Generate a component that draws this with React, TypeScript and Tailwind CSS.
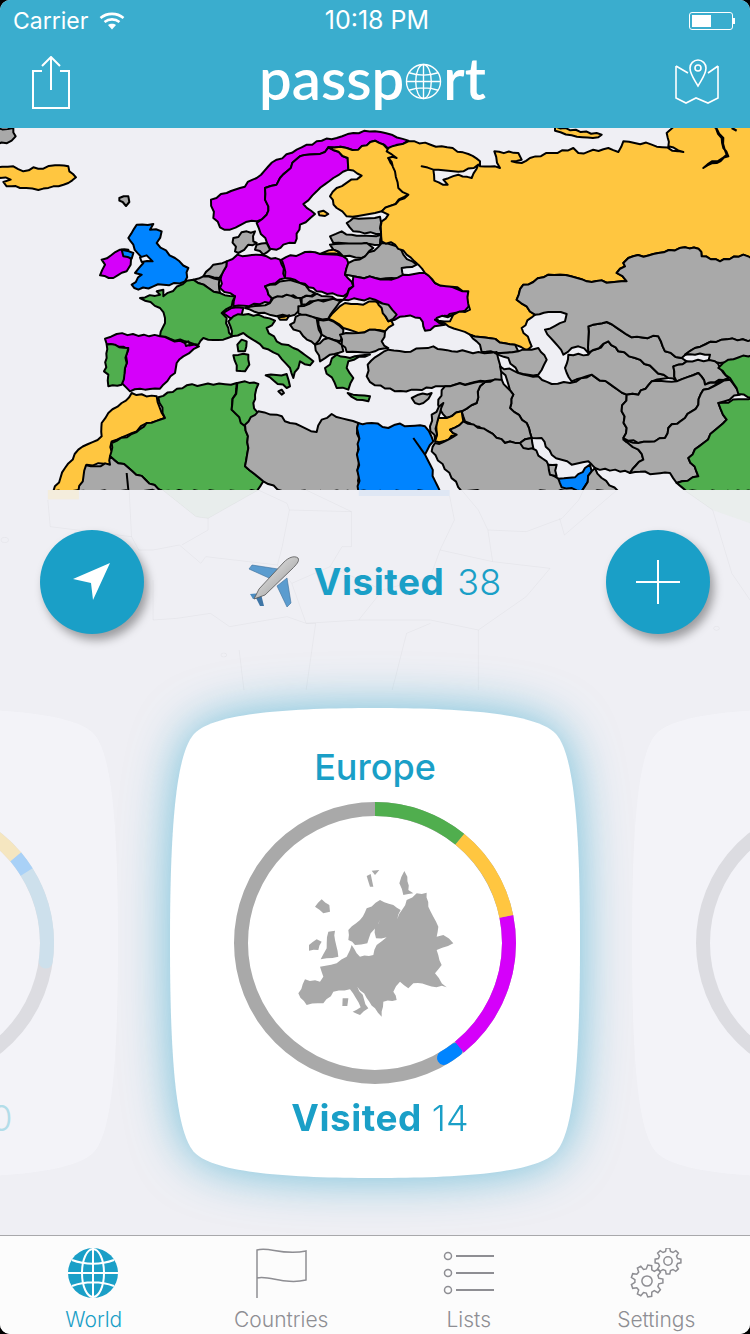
import React from 'react';

const GREEN = '#50ae4e';
const ORANGE = '#ffc640';
const PURPLE = '#d500fa';
const BLUE = '#0084ff';
const GRAY = '#a9a9a9';

// traced from the reference at 3x, x < 1125 is the left half
const westShapes: [string, string][] = [
  [GRAY, '-10,0 40,0 47,25 35,38 -10,50'],
  [ORANGE, '-10,118 40,115 70,130 100,118 130,122 165,112 205,115 208,130 228,148 205,165 160,175 115,186 60,180 20,175 10,162 32,155 0,150 -10,140'],
  [GRAY, '358,210 385,205 388,222 378,234 368,222 358,218'],
  [PURPLE, '633,215 680,195 720,180 770,150 830,95 890,65 950,40 1010,30 1060,15 1125,10 1175,20 1225,38 1205,50 1165,62 1125,38 1075,65 1040,60 985,58 975,72 900,85 840,150 830,170 795,180 795,215 805,235 800,260 770,280 755,278 690,305 660,298 640,270'],
  [PURPLE, '795,180 830,170 840,150 900,85 975,72 985,58 1043,90 1045,125 1000,150 950,190 910,228 945,258 900,290 885,345 850,350 830,365 810,362 770,285 800,260 805,235 795,215'],
  [ORANGE, '985,58 1040,60 1075,65 1125,38 1160,60 1190,90 1165,90 1190,130 1200,175 1225,200 1145,250 1125,255 1040,265 1010,240 990,205 1010,180 1085,143 1045,125 1043,90'],
  [ORANGE, '955,252 970,248 985,258 975,264 958,262'],
  [GRAY, '700,330 740,310 765,310 760,340 770,345 745,350 715,375 705,370'],
  [GRAY, '770,350 800,345 810,365 790,380 765,365'],
  [PURPLE, '680,400 712,380 770,380 800,385 840,395 855,450 795,475 815,510 810,525 700,535 705,505 660,480 665,440'],
  [PURPLE, '845,395 915,372 960,378 1030,385 1045,405 1035,440 1060,475 1030,505 950,490 940,480 900,465 855,450'],
  [GRAY, '610,445 640,410 680,400 665,440 658,450'],
  [GRAY, '580,455 610,445 658,455 660,495 625,480'],
  [GREEN, '420,510 480,500 470,490 490,485 490,505 560,458 580,455 625,480 660,495 705,505 695,535 665,555 680,570 685,600 697,625 670,635 610,630 595,650 555,640 480,625 495,570 480,540'],
  [GREEN, '725,635 740,640 735,670 715,670 712,650'],
  [GREEN, '700,682 745,680 748,710 735,730 710,728'],
  [BLUE, '410,290 460,288 450,305 485,310 470,345 525,390 565,420 555,460 490,470 415,485 395,470 425,440 405,435 430,405 400,350 385,330'],
  ['#efeff4', '420,388 440,382 458,400 425,402'],
  [PURPLE, '305,395 360,365 385,365 392,410 380,430 340,450 300,442 315,410'],
  [BLUE, '365,365 400,375 395,392 370,385'],
  [PURPLE, '315,632 350,618 480,625 555,645 597,655 550,685 530,705 525,735 490,770 480,782 420,782 390,790 365,765 375,720 385,665 340,650 320,648'],
  [GREEN, '320,650 345,650 385,660 375,720 365,770 325,775 325,740 312,730 320,690'],
  [PURPLE, '670,555 695,540 730,540 725,560 690,570'],
  [GREEN, '685,580 700,565 730,560 775,560 825,578 800,600 830,640 880,660 940,700 930,712 900,700 895,720 880,750 870,720 835,680 790,660 730,615 695,625'],
  [GREEN, '797,742 860,738 870,775 860,780'],
  [GRAY, '795,475 855,458 900,465 945,495 905,510 880,502 840,510 815,510'],
  [GRAY, '735,540 810,525 820,510 860,500 900,510 905,530 885,560 830,565 775,555'],
  [GRAY, '905,510 950,497 1025,515 980,515 930,520 905,530'],
  [GRAY, '895,535 940,520 1030,515 985,572 950,570 895,555'],
  [ORANGE, '985,572 1035,525 1090,530 1125,520 1160,545 1180,590 1155,610 1125,605 1075,615 1030,600'],
  [ORANGE, '835,568 868,562 860,575 840,575'],
  [GRAY, '870,590 900,560 950,572 965,620 945,650 910,625'],
  [GRAY, '955,575 985,575 1030,605 1020,640 1000,635 965,620'],
  [GRAY, '945,650 985,630 1025,650 1030,670 990,680 960,700'],
  [GRAY, '1020,620 1075,615 1125,605 1155,612 1145,640 1165,660 1125,670 1040,672 1025,650'],
  [GRAY, '835,790 845,785 852,795 845,800'],
  [GRAY, '555,645 565,640 570,650 558,654'],
  [ORANGE, '395,795 470,805 495,870 440,885 410,910 335,940 330,1010 260,1010 255,1090 160,1090 195,1020 235,965 305,925 305,885 325,855 365,825'],
  [GREEN, '475,808 560,772 640,770 710,765 695,845 735,890 745,960 735,1015 790,1060 770,1090 490,1090 330,985 335,945 410,912 440,885 495,870'],
  [GREEN, '712,765 735,760 775,768 765,800 760,825 775,870 735,895 695,845'],
  [GRAY, '775,850 830,860 870,885 950,912 965,875 995,858 1075,885 1075,1090 850,1090 790,1060 735,1015 745,960 735,890'],
  [GRAY, '235,1090 258,1012 330,1010 330,985 490,1090'],
  [GRAY, '1040,285 1060,270 1140,266 1145,318 1060,310'],
  [GRAY, '990,325 1025,310 1055,320 1145,320 1140,350 1000,345'],
  [GRAY, '990,350 1100,345 1120,360 1085,390 1030,385 1000,365'],
  [ORANGE, '960,378 1000,365 1020,380'],
  [GRAY, '1045,405 1095,385 1145,345 1190,355 1210,380 1250,410 1205,420 1210,445 1175,450 1125,450 1060,445 1035,440'],
  [PURPLE, '1060,445 1125,450 1175,455 1210,440 1275,435 1305,465 1405,490 1410,520 1395,548 1305,575 1335,590 1275,608 1260,570 1215,565 1185,575 1165,580 1145,525 1125,515 1030,515 1060,475'],
  [GRAY, '1130,520 1165,530 1190,560 1165,580 1145,540'],
];

const eastShapes: [string, string][] = [
  [ORANGE, '40,60 100,40 200,55 280,78 315,100 315,115 375,120 358,70 430,75 440,95 410,100 440,105 465,90 595,60 610,75 700,60 730,72 745,40 830,50 925,72 880,55 875,15 910,-10 1010,-10 1045,30 1055,80 985,120 1025,105 1060,85 1045,60 1040,30 1010,-10 1135,-10 1135,400 1105,380 1035,400 980,385 970,362 930,358 850,375 760,390 745,405 750,415 725,435 755,460 635,460 555,440 520,440 475,462 445,470 425,515 480,560 440,600 470,655 455,668 420,650 285,620 220,595 180,575 285,545 280,490 180,465 150,435 130,410 95,380 60,350 20,340 20,280 40,260 20,250 100,200 70,180 60,130 40,90 65,90 35,70'],
  ['#efeff4', '140,115 175,125 265,130 310,110 290,150 250,140 205,155 218,170 178,158 175,125'],
  [ORANGE, '540,-5 680,20 670,28 590,22 540,8'],
  ['#efeff4', '185,570 235,560 225,580 190,578'],
  [GRAY, '285,620 420,650 430,670 360,675 320,672 315,650'],
  [GRAY, '0,688 40,665 90,672 175,655 230,670 310,672 365,672 375,710 380,755 330,760 210,775 170,780 110,785 60,790 0,772 -25,745 -22,710'],
  [GRAY, '360,675 430,670 470,665 490,660 515,695 490,740 430,735 400,690'],
  [GRAY, '375,715 430,735 490,745 530,768 585,765 650,740 755,800 740,850 755,900 745,930 790,965 805,995 765,1035 660,1020 640,1000 590,1010 530,980 500,930 470,930 455,885 405,840 415,800'],
  [GRAY, '590,760 570,720 580,680 640,680 700,640 730,670 780,690 880,750 830,760 790,800 755,800 650,740'],
  [GRAY, '640,595 695,582 770,628 850,625 870,670 920,690 935,700 895,715 905,760 880,750 780,690 730,670 700,640 640,675'],
  [GRAY, '425,515 445,470 475,462 520,440 555,440 635,460 755,460 725,435 750,415 745,405 760,390 850,375 930,358 970,362 980,385 1035,400 1105,380 1135,395 1135,635 1040,635 960,660 920,690 870,670 850,625 770,628 695,582 640,595 640,675 610,655 590,660 565,680 510,605 570,580 575,558 520,552 480,560'],
  [GRAY, '930,680 960,660 1040,635 1135,635 1135,680 1035,705 1000,700 1005,680 960,680'],
  [GRAY, '895,715 935,700 1020,700 1035,720 1060,750 990,770 970,735 905,760'],
  [GRAY, '755,800 790,800 830,760 905,760 970,735 990,770 1060,755 985,785 970,830 930,870 880,900 870,930 790,945 745,930 755,900 740,850'],
  [GRAY, '745,935 790,945 870,930 880,900 930,870 970,830 985,785 1065,755 1095,800 1030,825 1055,875 940,990 970,1045 905,1065 885,1035 765,1035 805,995 790,965'],
  [GREEN, '1030,720 1060,695 1135,680 1135,810 1090,798 1065,750'],
  [GREEN, '1030,825 1135,810 1135,1090 935,1090 905,1065 970,1045 940,990 1055,875'],
  [GRAY, '375,755 380,755 415,800 405,840 455,885 470,930 435,945 390,945 340,910 270,880 260,850 305,825 315,775 330,762'],
  [GRAY, '210,775 330,762 315,775 305,825 260,850 215,870 195,845 190,815'],
  [ORANGE, '190,870 215,870 260,850 265,880 225,905 245,920 205,940 180,940'],
  [GRAY, '205,825 170,860 165,895 180,935 190,870'],
  [GRAY, '170,970 180,945 205,942 245,920 225,905 265,880 340,910 390,945 435,945 470,960 515,1000 530,1040 550,1052 620,1090 260,1090'],
  [GRAY, '435,945 470,930 475,960 445,960'],
  [GRAY, '520,1010 545,1010 545,1045 525,1040'],
  [BLUE, '550,1052 600,1048 630,1020 645,1010 650,1030 620,1090 560,1078'],
  [GRAY, '620,1090 650,1030 660,1020 680,1050 730,1090'],
  [BLUE, '-50,885 -10,885 40,900 60,890 150,895 175,940 150,980 195,1090 -50,1090'],
  [GRAY, '110,810 130,800 170,795 145,825 120,825'],
  // Greece and Crete sit on top of the edge of Turkey
  [GREEN, '-150,720 -115,680 -75,690 -15,680 -80,700 -85,720 -65,750 -80,785 -115,780'],
  [GREEN, '-82,795 -15,805 -20,820 -55,815'],
];

// the traced outlines are straight, real borders are not. Two countries that
// share an edge get the same wobble because it only depends on the end points.
function roughen(pts: string, amount = 9) {
  const p = pts.split(' ').map((s) => s.split(',').map(Number));
  const out: string[] = [];
  p.forEach((a, i) => {
    const b = p[(i + 1) % p.length];
    const flip = a[0] > b[0] || (a[0] === b[0] && a[1] > b[1]);
    const [s, e] = flip ? [b, a] : [a, b];
    const dx = e[0] - s[0];
    const dy = e[1] - s[1];
    const len = Math.hypot(dx, dy);
    const n = Math.max(1, Math.round(len / 16));
    const mid: string[] = [];
    for (let k = 1; k < n; k++) {
      const w = Math.sin(s[0] * 12.9 + s[1] * 78.2 + k * 37.7) * 43758.5;
      const d = (w - Math.floor(w) - 0.5) * amount;
      mid.push(`${(s[0] + (dx * k) / n - (dy / len) * d).toFixed(1)},${(s[1] + (dy * k) / n + (dx / len) * d).toFixed(1)}`);
    }
    if (flip) mid.reverse();
    out.push(`${a[0]},${a[1]}`, ...mid);
  });
  return out.join(' ');
}

function WorldMap() {
  return (
    <svg viewBox="0 0 2250 1086" className="block h-[362px] w-[750px] shrink-0 bg-[#efeff4]">
      <g stroke="#000" strokeWidth="6" strokeLinejoin="round">
        {westShapes.map(([fill, pts], i) => (
          <polygon key={i} fill={fill} points={roughen(pts)} />
        ))}
        <g transform="translate(1125,0)">
          {eastShapes.map(([fill, pts], i) => (
            <polygon key={i} fill={fill} points={roughen(pts)} />
          ))}
          <path d="M115,930 L150,980" fill="none" />
          <path d="M1070,0 L1085,8" fill="none" strokeWidth="7" />
        </g>
        <path d="M380,1035 L385,1086" fill="none" />
      </g>
    </svg>
  );
}

function FadedAfrica() {
  return (
    <svg
      viewBox="0 0 1568 600"
      preserveAspectRatio="none"
      className="absolute left-0 top-0 h-[200px] w-[750px]"
    >
      <rect x="100" y="0" width="65" height="28" fill="#f6ecd2" opacity="0.7" />
      <rect x="750" y="0" width="190" height="18" fill="#dfe7f4" />
      <polygon points="340,0 540,0 435,85 410,80" fill="#e6ece8" opacity="0.7" />
      <polygon points="1430,0 1568,0 1568,100 1490,60" fill="#e6ece8" opacity="0.6" />
      <g fill="none" stroke="#000" strokeOpacity="0.045" strokeWidth="2" vectorEffect="non-scaling-stroke">
        <path d="M100,30 L105,110 L275,140 L290,180 L320,180 L375,165 L420,220 L430,200 L520,215 L580,225 L610,280 L690,230 L715,170 L735,170 L735,65 L605,60 L590,170 L580,225" />
        <path d="M270,0 L275,140 M340,0 L410,80 L435,85 L435,120 L380,165 M435,85 L540,0 L600,40 L605,60 M640,0 L735,65" />
        <path d="M940,18 L950,90 L920,180 L900,260 L800,300 L690,230 M920,180 L1030,215 L1150,235 L1100,320 L1000,420 L1000,600" />
        <path d="M965,0 L1000,60 L1020,120 L1030,215 M1020,120 L1100,125 L1175,85 L1210,30 L1220,0 M1170,85 L1180,135 L1290,0" />
        <path d="M320,270 L320,390 L370,385 L440,370 L480,410 L600,380 L640,400 L750,390 L900,390 L1000,420" />
        <path d="M610,280 L640,400 L660,400 L640,600 M500,480 L510,600 M820,600 L850,430 L900,400 M750,390 L800,300" />
        <path d="M1490,60 L1530,250 L1568,330 M1430,0 L1490,60" />
        <circle cx="10" cy="150" r="8" />
        <circle cx="1498" cy="415" r="6" />
        <circle cx="468" cy="495" r="6" />
      </g>
    </svg>
  );
}

function Plane() {
  return (
    <svg viewBox="0 0 52 52" className="h-[52px] w-[52px]">
      <defs>
        <linearGradient id="silver" x1="0" y1="0" x2="1" y2="1">
          <stop offset="0" stopColor="#f4f4f4" />
          <stop offset="0.55" stopColor="#bdbdbd" />
          <stop offset="1" stopColor="#5f5f5f" />
        </linearGradient>
      </defs>
      <polygon points="31,13 5,9 2,13 22,22" fill="#5b9ccf" stroke="#3c6f9a" strokeWidth="0.6" />
      <polygon points="40,22 44,47 40,51 30,30" fill="#5b9ccf" stroke="#3c6f9a" strokeWidth="0.6" />
      <polygon points="14,37 3,38 6,43 13,42" fill="#4c8cc0" />
      <polygon points="14,38 17,50 13,50 9,42" fill="#3f76a6" />
      <path d="M51,2 C47,-1 41,2 37,6 L12,33 L7,43 L18,39 L45,13 C49,9 53,5 51,2Z" fill="url(#silver)" stroke="#555" strokeWidth="0.8" />
    </svg>
  );
}

const europe =
  '415,880 435,838 480,845 490,830 480,800 530,790 560,770 570,750 575,735 590,760 600,770 640,765 650,735 680,712 648,715 645,680 660,660 632,700 622,730 585,735 565,720 565,690 600,660 620,625 660,600 700,615 722,630 712,658 740,600 770,580 800,578 805,620 835,680 830,710 850,705 880,730 830,750 845,795 825,820 860,862 800,855 760,850 745,865 720,845 700,875 710,900 670,905 665,950 645,925 628,905 592,860 625,925 600,945 578,935 602,922 570,868 520,875 490,910 440,915';

function Ring() {
  const c = { cx: 645, cy: 729, r: 402, fill: 'none', strokeWidth: 42, pathLength: 360 };
  return (
    <svg viewBox="222 306 846 846" className="h-[282px] w-[282px] shrink-0">
      <g transform="rotate(-90 645 729)">
        <circle {...c} stroke={GRAY} />
        <circle {...c} stroke={BLUE} strokeLinecap="round" strokeDasharray="6 360" strokeDashoffset="-143" />
        <circle {...c} stroke={PURPLE} strokeDasharray="62.5 360" strokeDashoffset="-78.5" />
        <circle {...c} stroke={ORANGE} strokeDasharray="39.3 360" strokeDashoffset="-39.2" />
        <circle {...c} stroke={GREEN} strokeDasharray="39.2 360" />
      </g>
      <g fill={GRAY}>
        <polygon points={roughen(europe, 7)} />
        <polygon points={roughen('465,620 485,598 508,615 510,635 490,640', 5)} />
        <polygon points={roughen('447,735 470,718 485,725 475,750 447,752', 5)} />
        <polygon points={roughen('505,695 525,692 525,720 535,770 482,778 500,745', 5)} />
        <polygon points="620,528 632,522 640,560 630,560" />
        <polygon points="635,512 658,510 645,525" />
        <polygon points={roughen('733,513 742,530 745,570 760,580 730,585 718,550', 5)} />
        <polygon points="548,895 565,895 562,918 547,918" />
      </g>
    </svg>
  );
}

function LeftRing() {
  const c = { cx: 141, cy: 141, r: 134, fill: 'none', strokeWidth: 14, pathLength: 360 };
  return (
    <svg viewBox="0 0 282 282" className="h-[282px] w-[282px] shrink-0">
      <g transform="rotate(-90 141 141)">
        <circle {...c} stroke="#dcdce1" />
        <circle {...c} stroke="#cde0ec" strokeLinecap="round" strokeDasharray="40 360" strokeDashoffset="-58" />
        <circle {...c} stroke="#a9d1f7" strokeDasharray="8 360" strokeDashoffset="-50" />
        <circle {...c} stroke="#f5e6c0" strokeDasharray="50 360" />
      </g>
    </svg>
  );
}

function SideCard({ children }: { children: React.ReactNode }) {
  return (
    <div className="relative z-10 flex h-[470px] w-[410px] shrink-0 flex-col items-center bg-[#f3f3f8] pt-[94px] [clip-path:path('M205,0_C290,0_365,5_385,25_C403,43_410,110_410,235_C410,360_403,427_385,445_C365,465_290,470_205,470_C120,470_45,465_25,445_C7,427_0,360_0,235_C0,110_7,43_25,25_C45,5_120,0_205,0Z')]">
      {children}
    </div>
  );
}

function Gear({ cx, cy, r, teeth }: { cx: number; cy: number; r: number; teeth: number }) {
  const pts: string[] = [];
  const step = (Math.PI * 2) / teeth;
  for (let i = 0; i < teeth; i++) {
    const a = i * step;
    [
      [-0.3, r * 0.76],
      [-0.16, r],
      [0.16, r],
      [0.3, r * 0.76],
    ].forEach(([o, rad]) => {
      const t = a + o * step * 1.1;
      pts.push(`${(cx + Math.cos(t) * rad).toFixed(1)},${(cy + Math.sin(t) * rad).toFixed(1)}`);
    });
  }
  return (
    <>
      <polygon points={pts.join(' ')} />
      <circle cx={cx} cy={cy} r={r * 0.32} />
    </>
  );
}

function TabBar() {
  return (
    <div className="grid h-[99px] shrink-0 grid-cols-4 border-t border-[#a8a8ab] bg-[#fcfcfc] font-[Inter,sans-serif] text-[21px] font-light text-[#8e8e93]">
      <div className="flex flex-col items-center pt-[12px] text-[#1a9fc7]">
        <svg viewBox="0 0 52 50" className="ml-[-2px] h-[50px] w-[52px]">
          <circle cx="26" cy="25" r="25" fill="#1a9fc7" />
          <g fill="none" stroke="#fff" strokeWidth="2">
            <ellipse cx="26" cy="25" rx="11" ry="24" />
            <path d="M26,0 V50 M1,25 H51 M5,12 C18,17 34,17 47,12 M5,38 C18,33 34,33 47,38" />
          </g>
        </svg>
        <span className="mt-[9px] leading-[26px]">World</span>
      </div>
      <div className="flex flex-col items-center pt-[12px]">
        <svg viewBox="0 0 52 50" className="h-[50px] w-[52px]" fill="none" stroke="#8e8e93" strokeWidth="1.5">
          <path d="M2,50 V2 C14,-2 26,8 51,3 V32 C30,37 14,27 2,30" />
        </svg>
        <span className="mt-[9px] leading-[26px]">Countries</span>
      </div>
      <div className="flex flex-col items-center pt-[12px]">
        <svg viewBox="0 0 52 50" className="h-[50px] w-[52px]" fill="none" stroke="#8e8e93" strokeWidth="1.5">
          <circle cx="5" cy="8" r="3.5" />
          <circle cx="5" cy="25" r="3.5" />
          <circle cx="5" cy="42" r="3.5" />
          <path d="M13,8 H51 M13,25 H51 M13,42 H51" strokeWidth="2" />
        </svg>
        <span className="mt-[9px] leading-[26px]">Lists</span>
      </div>
      <div className="flex flex-col items-center pt-[12px]">
        <svg viewBox="0 0 52 50" className="h-[50px] w-[52px]" fill="none" stroke="#8e8e93" strokeWidth="1.5">
          <Gear cx={17} cy={33} r={16} teeth={9} />
          <Gear cx={38} cy={13} r={13} teeth={8} />
        </svg>
        <span className="mt-[9px] leading-[26px]">Settings</span>
      </div>
    </div>
  );
}

function Header() {
  return (
    <div className="h-[128px] shrink-0 bg-[#3aadce] text-white">
      <div className="flex h-[40px] items-center justify-between pl-[13px] pr-[15px] pt-[2px] font-[Inter,sans-serif]">
        <div className="flex w-[200px] items-center gap-[11px] text-[23px]">
          <span>Carrier</span>
          <svg viewBox="0 0 26 18" className="h-[18px] w-[26px]" fill="none" stroke="#fff" strokeWidth="2.6">
            <path d="M1.5,6 C8,0.5 18,0.5 24.5,6 M5.5,10 C10,6.5 16,6.5 20.5,10" />
            <path d="M9,13 L13,17.5 L17,13 C15,11.2 11,11.2 9,13Z" fill="#fff" stroke="none" />
          </svg>
        </div>
        <span className="ml-[6px] text-[25px]">10:18 PM</span>
        <div className="flex w-[200px] items-center justify-end">
          <div className="h-[18px] w-[44px] rounded-[3px] border border-white p-[2px]">
            <div className="h-full w-[50%] bg-white" />
          </div>
          <div className="h-[6px] w-[2px] bg-white" />
        </div>
      </div>
      <div className="flex h-[88px] items-start justify-between pl-[32px] pr-[31px] pt-[14px]">
        <svg viewBox="0 0 38 54" className="mt-[2px] h-[54px] w-[38px]" fill="none" stroke="#fff" strokeWidth="2">
          <path d="M10,15 H1 V52 H37 V15 H28 M19,1 V34 M10,10 L19,1 L28,10" />
        </svg>
        <div className="mt-[-6px] flex items-center font-[Lato,sans-serif] text-[58px] font-semibold leading-[60px]">
          <span>passp</span>
          <svg viewBox="0 0 38 38" className="mx-[1px] mt-[6px] h-[37px] w-[37px]" fill="none" stroke="#fff" strokeWidth="1.4">
            <circle cx="19" cy="19" r="17.5" />
            <ellipse cx="19" cy="19" rx="8" ry="17.5" />
            <path d="M19,1.5 V36.5 M1.5,19 H36.5 M4,10 C13,13 25,13 34,10 M4,28 C13,25 25,25 34,28" />
          </svg>
          <span>rt</span>
        </div>
        <svg viewBox="0 0 44 46" className="mt-[5px] h-[46px] w-[44px]" fill="none" stroke="#fff" strokeWidth="1.6">
          <path d="M1,7 L13,14 M43,7 L33,14 M1,7 V39 L11,44 L21,39 L33,44 L43,39 V7" />
          <path d="M23,27 C19,20 15,15 15,9 A8,8 0 0 1 31,9 C31,15 27,20 23,27Z" />
          <circle cx="23" cy="9" r="3" />
        </svg>
      </div>
    </div>
  );
}

export default function App() {
  return (
    <div className="h-[1334px] w-[750px] overflow-hidden bg-black">
      <div className="flex h-full flex-col overflow-hidden rounded-[10px] bg-[#efeff4]">
        <Header />
        <WorldMap />
        <div className="relative flex flex-1 flex-col pt-[40px]">
          <FadedAfrica />
          <div className="relative flex items-center justify-between px-[40px]">
            <div className="flex h-[104px] w-[104px] items-center justify-center rounded-full bg-[#1a9fc7] shadow-[4px_6px_10px_rgba(0,0,0,0.35)]">
              <svg viewBox="0 0 104 104" className="h-[104px] w-[104px]">
                <polygon points="70,33 33,49 51,53 53,70" fill="#fff" />
              </svg>
            </div>
            <div className="mr-[2px] flex items-center gap-[15px] font-[Inter,sans-serif] leading-[44px] text-[#1a9fc7]">
              <Plane />
              <span className="flex items-baseline gap-[13px]">
                <span className="text-[37px] font-bold tracking-[0.5px]">Visited</span>
                <span className="text-[36px] font-light">38</span>
              </span>
            </div>
            <div className="relative flex h-[104px] w-[104px] items-center justify-center rounded-full bg-[#1a9fc7] shadow-[4px_6px_10px_rgba(0,0,0,0.35)]">
              <svg viewBox="0 0 44 44" className="h-[44px] w-[44px]">
                <path d="M22,0 V44 M0,22 H44" stroke="#fff" strokeWidth="2" />
              </svg>
            </div>
          </div>
          <div className="relative mt-[74px] flex justify-center gap-[52px]">
            <SideCard>
              <LeftRing />
              <p className="ml-[14px] mt-[12px] flex items-baseline gap-[10px] font-[Inter,sans-serif] leading-[44px] text-[#b3dde9]">
                <span className="text-[37px] font-bold tracking-[0.5px]">Visited</span>
                <span className="text-[36px] font-light">20</span>
              </p>
            </SideCard>
            <div className="relative shrink-0 drop-shadow-[0_0_24px_rgba(26,159,199,0.6)]">
              <div className="flex h-[470px] w-[410px] flex-col items-center bg-white pt-[37px] [clip-path:path('M205,0_C290,0_365,5_385,25_C403,43_410,110_410,235_C410,360_403,427_385,445_C365,465_290,470_205,470_C120,470_45,465_25,445_C7,427_0,360_0,235_C0,110_7,43_25,25_C45,5_120,0_205,0Z')]">
                <h2 className="font-[Inter,sans-serif] text-[36px] font-medium leading-[44px] text-[#1a9fc7]">Europe</h2>
                <div className="mt-[13px]">
                  <Ring />
                </div>
                <p className="ml-[10px] mt-[12px] flex items-baseline gap-[10px] font-[Inter,sans-serif] leading-[44px] text-[#1a9fc7]">
                  <span className="text-[37px] font-bold tracking-[0.5px]">Visited</span>
                  <span className="text-[36px] font-light">14</span>
                </p>
              </div>
            </div>
            <SideCard>
              <svg viewBox="0 0 282 282" className="h-[282px] w-[282px] shrink-0">
                <circle cx="141" cy="141" r="134" fill="none" stroke="#dcdce1" strokeWidth="14" />
              </svg>
            </SideCard>
          </div>
        </div>
        <TabBar />
      </div>
    </div>
  );
}
